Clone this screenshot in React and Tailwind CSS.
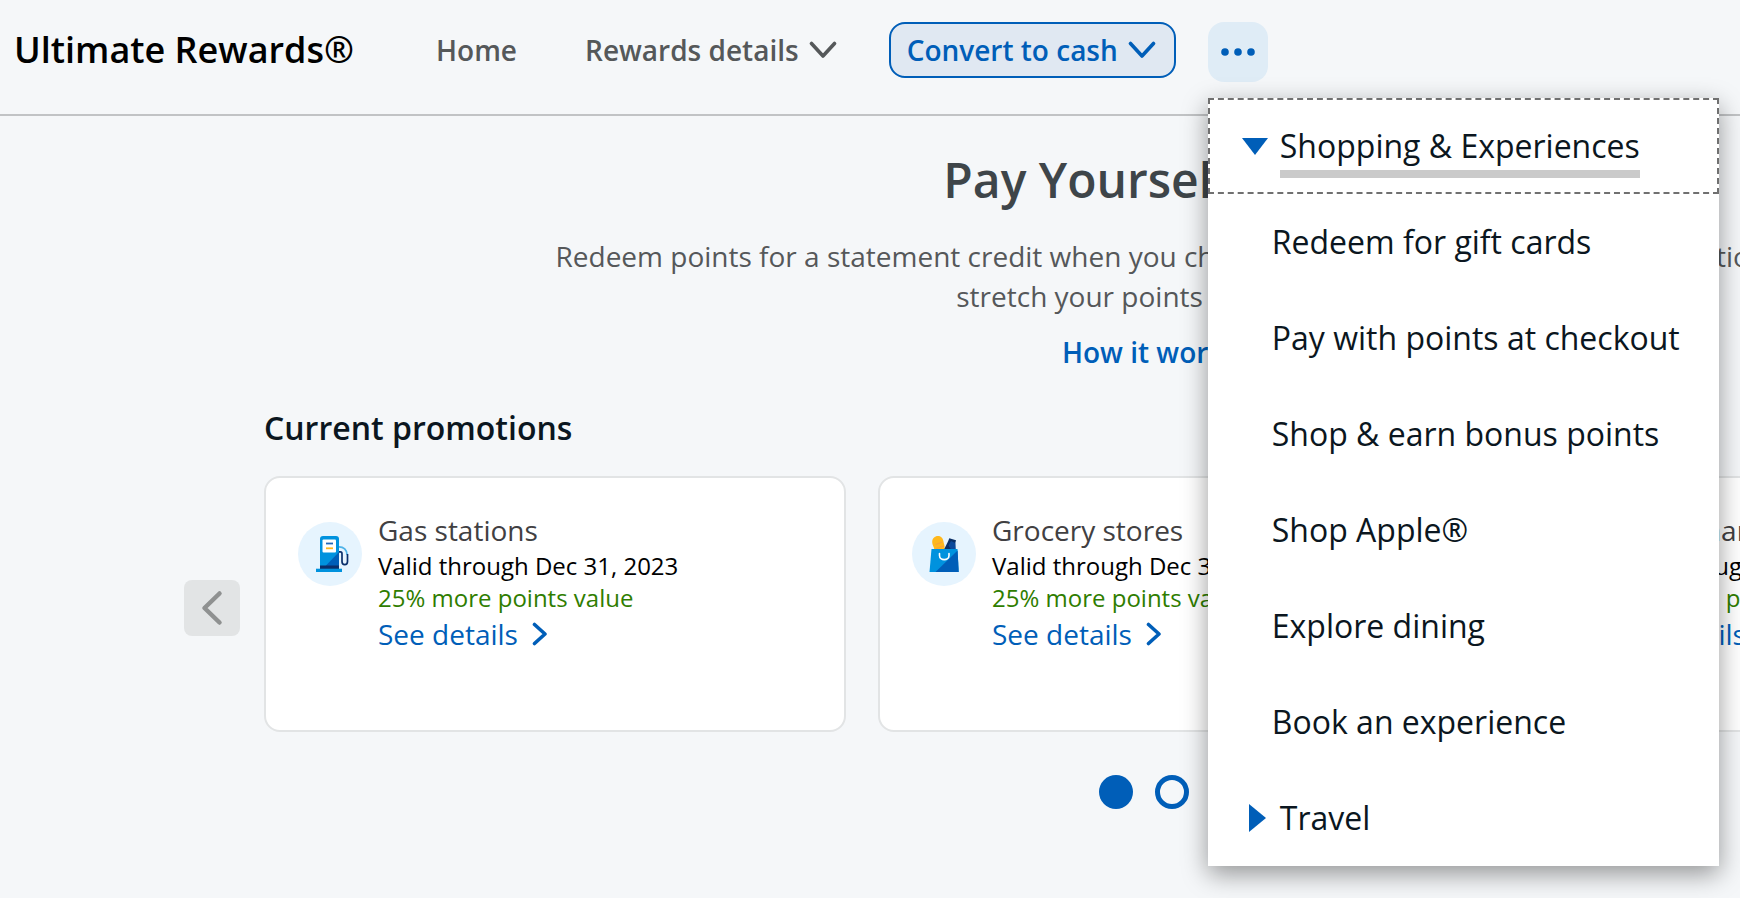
import { useState } from 'react';

const NAV_LINK = 'text-[28px] leading-10 font-semibold text-[#55585a]';

const PROMOTIONS = [
  { title: 'Gas stations', valid: 'Valid through Dec 31, 2023', icon: GasIcon },
  { title: 'Grocery stores', valid: 'Valid through Dec 31, 2023', icon: GroceryIcon },
  { title: 'Select charities', valid: 'Valid through Dec 31, 2023', icon: CharityIcon },
];

const SHOPPING_LINKS = [
  'Redeem for gift cards',
  'Pay with points at checkout',
  'Shop & earn bonus points',
  'Shop Apple®',
  'Explore dining',
  'Book an experience',
];

function ChevronDown() {
  return (
    <svg width="28" height="20" viewBox="0 0 28 20" fill="none" stroke="currentColor" strokeWidth="3.6" strokeLinecap="round" strokeLinejoin="round" aria-hidden="true">
      <path d="M2.5 3.5 14 16 25.5 3.5" />
    </svg>
  );
}

function ChevronRight() {
  return (
    <svg width="16" height="24" viewBox="0 0 16 24" fill="none" stroke="currentColor" strokeWidth="3.6" strokeLinecap="round" strokeLinejoin="round" aria-hidden="true">
      <path d="M2.5 2.5 13 12 2.5 21.5" />
    </svg>
  );
}

function GasIcon() {
  return (
    <svg width="64" height="64" viewBox="0 0 64 64" aria-hidden="true">
      <circle cx="32" cy="32" r="32" fill="#e6f4fe" />
      <path d="M22 17a3 3 0 0 1 3-3h13a3 3 0 0 1 3 3v27H22z" fill="#0092de" />
      <path d="M41 30v14H27.500z" fill="#005eb8" />
      <rect x="24.5" y="17.5" width="13.5" height="13" rx="1" fill="#fff" />
      <path d="M28 21.5h7" stroke="#2167b8" strokeWidth="1.8" />
      <path d="M28 26.3h7" stroke="#ffb81c" strokeWidth="1.8" />
      <path d="M22 43.5h19V47H22z" fill="#0a2f6b" />
      <path d="M18 46.7h26V50H18z" fill="#0092de" />
      <path d="M41 24.8c4.500 0 8 3 8 8" fill="none" stroke="#4fb3e8" strokeWidth="1.8" />
      <path d="M41 29.8h1.500c1 0 1.500.7 1.500 2v7.700c0 4.200 5.500 4.200 5.500 0v-7.500" fill="none" stroke="#0a2f6b" strokeWidth="1.7" />
    </svg>
  );
}

function GroceryIcon() {
  return (
    <svg width="64" height="64" viewBox="0 0 64 64" aria-hidden="true">
      <circle cx="32" cy="32" r="32" fill="#e6f4fe" />
      <path d="M22 27.500c.8-2-1.800-3.800-1.800-7.500 0-3.500 2.500-6 5.800-6s5.200 2.500 5.500 5.500c.2 2.500 1.500 3 1 8z" fill="#ffb81c" />
      <path d="m24 22.500 6-2.500M24.500 26.500l7-2.500" stroke="#f9a03b" strokeWidth="1.2" strokeLinecap="round" />
      <path d="m32 27.500 4-8 1.300-3.300 6.700 2-.8 3.300.3 6z" fill="#0b2f66" />
      <path d="m36.500 23.500 2.500-4.500 4.300 2 .2 6.500H39z" fill="#0d4a9b" />
      <path d="M19.500 27h26L46.700 50H17.500z" fill="#0092de" />
      <path d="m45.600 28.500 1.100 21.500H23.500z" fill="#005eb8" />
      <path d="M27.500 31.500v2c0 5.500 9.500 5.500 9.500 0v-2" fill="none" stroke="#fff" strokeWidth="1.6" strokeLinecap="round" />
    </svg>
  );
}

function CharityIcon() {
  return (
    <svg width="64" height="64" viewBox="0 0 64 64" aria-hidden="true">
      <circle cx="32" cy="32" r="32" fill="#e6f4fe" />
      <path d="M32 48 18 33c-5-8 7-18 14-8 7-10 19 0 14 8z" fill="#0092de" />
    </svg>
  );
}

function PromotionCard({ title, valid, icon: Icon }) {
  return (
    <article className="flex h-64 w-[582px] items-start gap-4 rounded-2xl border-2 border-[#e2e4e5] bg-white px-8 pt-8">
      <div className="shrink-0 pt-3">
        <Icon />
      </div>
      <div>
        <h3 className="text-[28px] leading-10 text-[#414042]">{title}</h3>
        <p className="text-[24px] leading-8 text-black">{valid}</p>
        <p className="text-[24px] leading-8 text-[#2f7d00]">25% more points value</p>
        <a href="#details" className="flex items-center gap-3.5 text-[28px] leading-10 text-[#005eb8]">
          See details
          <ChevronRight />
        </a>
      </div>
    </article>
  );
}

function MoreMenu() {
  const [expanded, setExpanded] = useState(true);

  return (
    <div className="absolute top-[76px] left-0 z-10 w-[511px] bg-white text-[32px] leading-10 text-[#0b1620] shadow-[0_8px_24px_rgba(0,0,0,0.4)]">
      <button
        type="button"
        aria-expanded={expanded}
        onClick={() => setExpanded(!expanded)}
        className="flex h-24 w-full items-center gap-3 border-2 border-dashed border-[#707070] pl-8"
      >
        <svg width="26" height="18" viewBox="0 0 26 18" aria-hidden="true">
          <path d="M0 1h26L13 18z" fill="#005eb8" />
        </svg>
        <span className="relative">
          Shopping &amp; Experiences
          <span className="absolute inset-x-0 top-full mt-1 h-2 bg-[#cacaca]" />
        </span>
      </button>
      {expanded && (
        <ul>
          {SHOPPING_LINKS.map(label => (
            <li key={label}>
              <a href="#shopping" className="flex h-24 items-center pl-16 whitespace-nowrap">{label}</a>
            </li>
          ))}
        </ul>
      )}
      <button type="button" aria-expanded="false" className="flex h-24 w-full items-center gap-3.5 pl-10">
        <svg width="18" height="28" viewBox="0 0 18 28" aria-hidden="true">
          <path d="M1 0v28l17-14z" fill="#005eb8" />
        </svg>
        Travel
      </button>
    </div>
  );
}

function Header() {
  const [menuOpen, setMenuOpen] = useState(true);

  return (
    <header className="flex h-[116px] items-start border-b-2 border-[#c1c3c5] pt-[22px] pl-3.5 whitespace-nowrap">
      <span className="pt-1 text-[36px] leading-12 font-semibold text-black">Ultimate Rewards®</span>
      <nav className="flex items-start pl-[82px]">
        <a href="#home" className={`${NAV_LINK} pt-2`}>Home</a>
        <button type="button" className={`${NAV_LINK} flex items-center gap-2.5 pt-2 pl-17`}>
          Rewards details
          <ChevronDown />
        </button>
        <button
          type="button"
          className="ml-13 flex h-14 items-center gap-2.5 rounded-2xl border-2 border-[#005eb8] bg-[#e0e8f2] pr-[18px] pl-4 text-[28px] leading-10 font-semibold text-[#005eb8]"
        >
          Convert to cash
          <ChevronDown />
        </button>
        <div className="relative ml-8">
          <button
            type="button"
            aria-label="More"
            aria-expanded={menuOpen}
            onClick={() => setMenuOpen(!menuOpen)}
            className="flex size-15 items-center justify-center rounded-2xl bg-[#dfecf6]"
          >
            <svg width="34" height="8" viewBox="0 0 34 8" fill="#005eb8" aria-hidden="true">
              <circle cx="4" cy="4" r="3.8" />
              <circle cx="17" cy="4" r="3.8" />
              <circle cx="30" cy="4" r="3.8" />
            </svg>
          </button>
          {menuOpen && <MoreMenu />}
        </div>
      </nav>
    </header>
  );
}

export default function App() {
  return (
    <div className="min-h-screen overflow-hidden bg-[#f5f7f9] font-['Open_Sans',sans-serif]">
      {/* The page keeps its desktop width and is clipped in narrower windows */}
      <div className="min-w-[2336px]">
        <Header />
        <main>
          <section className="flex flex-col items-center pt-8 text-center">
            <h1 className="text-[48px] leading-16 font-semibold text-[#3e4549]">Pay Yourself Back®</h1>
            <p className="mt-6 text-[28px] leading-10 text-[#55585a]">
              Redeem points for a statement credit when you choose purchases across rotating promotions
              <br />
              stretch your points even further.
            </p>
            <a href="#how" className="mt-4 flex items-center gap-5 text-[28px] leading-10 font-semibold text-[#005eb8]">
              How it works
              <ChevronRight />
            </a>
          </section>

          <section className="mt-8 pl-[184px]">
            <h2 className="pl-20 text-[32px] leading-12 font-semibold text-[#0b1620]">Current promotions</h2>
            <div className="mt-6 flex items-center gap-6">
              <button type="button" aria-label="Previous promotions" className="mt-2 flex size-14 items-center justify-center rounded-lg bg-[#e2e4e5] text-[#8f9191]">
                <svg width="22" height="36" viewBox="0 0 22 36" fill="none" stroke="currentColor" strokeWidth="4.5" strokeLinecap="round" strokeLinejoin="round" aria-hidden="true">
                  <path d="M18.5 3.500 3.500 18l15 14.500" />
                </svg>
              </button>
              <div className="flex gap-8">
                {PROMOTIONS.map(promo => <PromotionCard key={promo.title} {...promo} />)}
              </div>
            </div>
          </section>

          <div className="mt-[43px] flex justify-center gap-[22px] pl-2">
            <button type="button" aria-label="Slide 1" className="size-[34px] rounded-full bg-[#005eb8]" />
            <button type="button" aria-label="Slide 2" className="size-[34px] rounded-full border-5 border-[#005eb8]" />
            <button type="button" aria-label="Slide 3" className="size-[34px] rounded-full border-5 border-[#005eb8]" />
          </div>
        </main>
      </div>
    </div>
  );
}
